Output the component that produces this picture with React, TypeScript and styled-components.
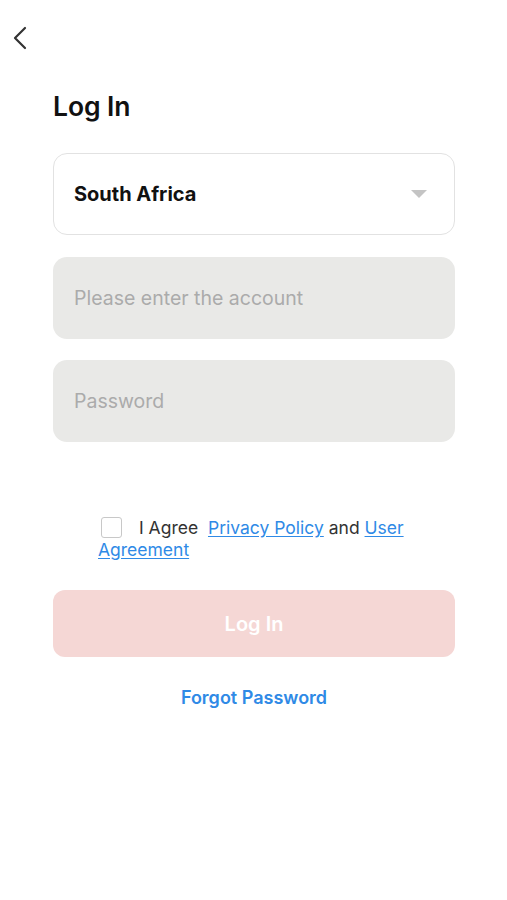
import styled, { createGlobalStyle } from "styled-components";

const GlobalStyle = createGlobalStyle`
  html, body {
    margin: 0;
    padding: 0;
    background: #ffffff;
  }
  body {
    font-family: Inter, "Noto Sans", "Liberation Sans", sans-serif;
    -webkit-font-smoothing: antialiased;
  }
`;

export default function App() {
    return <Page>
        <GlobalStyle/>
        <TopBar>
            <BackButton aria-label="Back">
                <svg width="14" height="24" viewBox="0 0 14 24" fill="none">
                    <path d="M12 2L2 12L12 22" stroke="#333" strokeWidth="2.2" strokeLinecap="round" strokeLinejoin="round"/>
                </svg>
            </BackButton>
        </TopBar>

        <Form>
            <Title>Log In</Title>

            <Select>
                <span>South Africa</span>
                <Caret/>
            </Select>

            <Field placeholder="Please enter the account"/>
            <Field type="password" placeholder="Password"/>

            <Agree>
                <CheckBox/>
                <span>I Agree&nbsp; </span>
                <TextLink href="#">Privacy Policy</TextLink>
                <span> and </span>
                <TextLink href="#">User</TextLink> <TextLink href="#">Agreement</TextLink>
            </Agree>

            <SubmitButton disabled>Log In</SubmitButton>

            <Forgot href="#">Forgot Password</Forgot>
        </Form>
    </Page>
}

const Page = styled.div`
  width: 100%;
  min-height: 900px;
  background: #fff;
`

const TopBar = styled.div`
  height: 64px;
  display: flex;
  align-items: flex-start;
  padding: 26px 0 0 13px;
  box-sizing: border-box;
`

const BackButton = styled.button`
  background: none;
  border: none;
  padding: 0;
  cursor: pointer;
  display: flex;
`

const Form = styled.div`
  display: flex;
  flex-direction: column;
  padding: 0 52px 0 53px;
`

const Title = styled.h1`
  margin: 24px 0 0;
  font-size: 26.5px;
  font-weight: 600;
  color: #111;
  line-height: 36px;
  letter-spacing: -0.1px;
`

const Select = styled.div`
  margin-top: 29px;
  height: 82px;
  box-sizing: border-box;
  border: 1px solid #e2e2e2;
  border-radius: 14px;
  display: flex;
  align-items: center;
  justify-content: space-between;
  padding: 0 27px 0 20px;
  font-size: 20px;
  font-weight: 700;
  color: #111;
`

const Caret = styled.span`
  width: 0;
  height: 0;
  border-left: 8px solid transparent;
  border-right: 8px solid transparent;
  border-top: 8px solid #c4c4c4;
`

const Field = styled.input`
  margin-top: 22px;
  height: 82px;
  box-sizing: border-box;
  border: none;
  border-radius: 14px;
  background: #e9e9e7;
  padding: 0 21px;
  font: inherit;
  font-size: 19.5px;
  color: #222;
  outline: none;

  &::placeholder {
    color: #ababab;
  }

  & + & {
    margin-top: 21px;
  }
`

const Agree = styled.p`
  margin: 75px 0 0;
  padding: 0 40px 0 45px;
  font-size: 17.5px;
  line-height: 22px;
  color: #333;
`

const CheckBox = styled.span`
  display: inline-block;
  width: 21px;
  height: 21px;
  box-sizing: border-box;
  border: 1.5px solid #c8c8c8;
  border-radius: 3px;
  vertical-align: -4px;
  margin: 0 17px 0 3px;
`

const TextLink = styled.a`
  color: #2f8ae6;
  text-decoration: underline;
  text-underline-offset: 2px;
`

const SubmitButton = styled.button`
  margin-top: 29px;
  height: 67px;
  border: none;
  border-radius: 12px;
  background: #f5d7d5;
  color: #fff;
  font: inherit;
  font-size: 20px;
  font-weight: 600;
`

const Forgot = styled.a`
  margin-top: 30px;
  align-self: center;
  color: #2f8ae6;
  font-size: 18px;
  font-weight: 600;
  text-decoration: none;
`
